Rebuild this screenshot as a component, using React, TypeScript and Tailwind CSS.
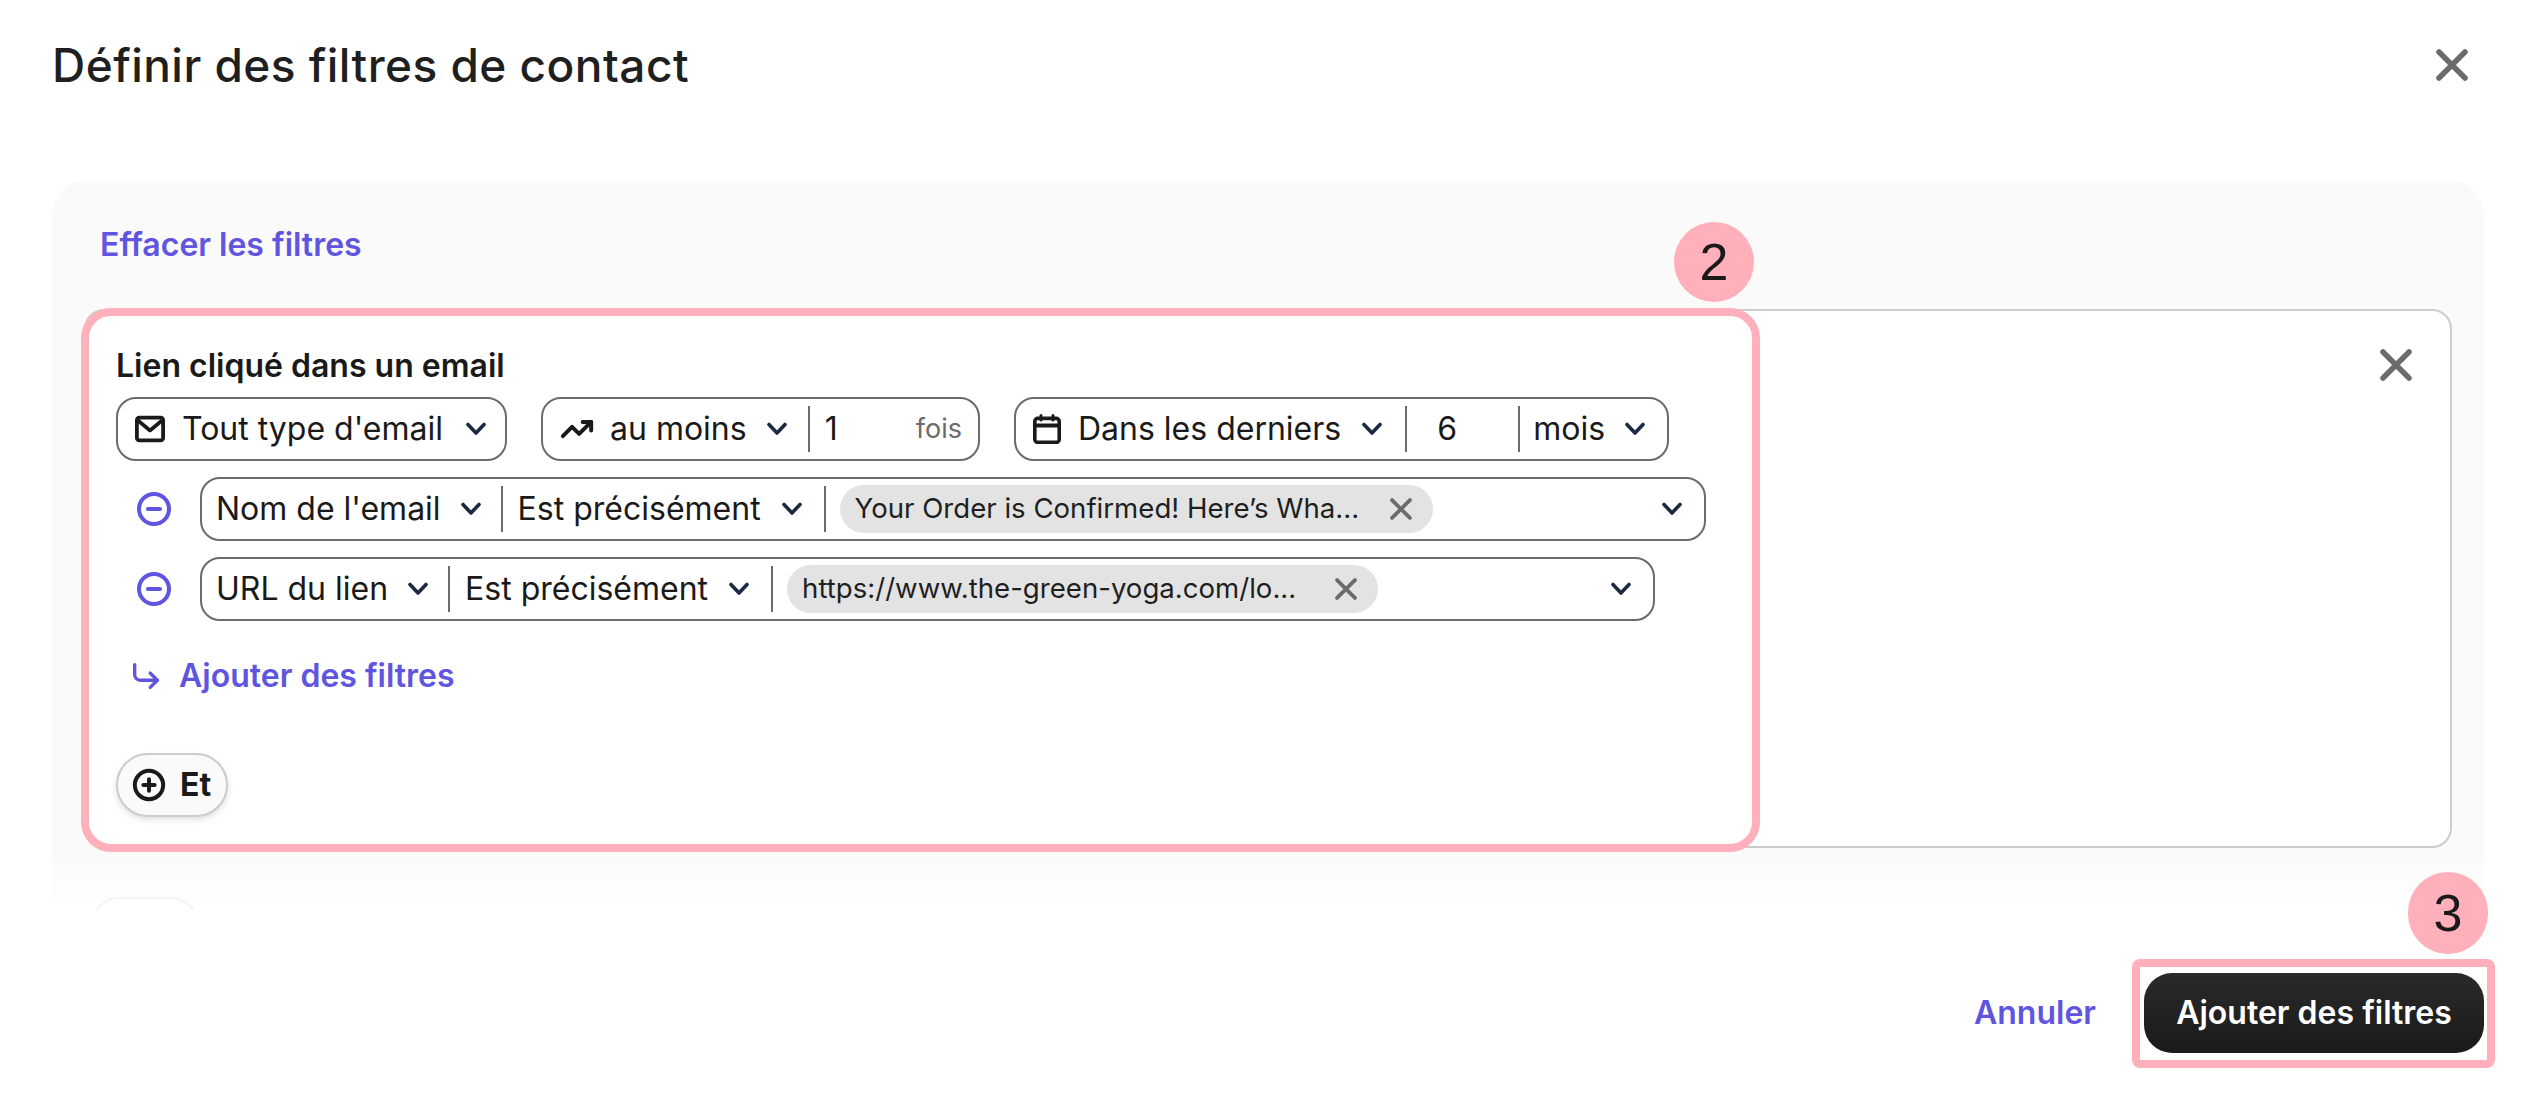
import React from 'react';
import { CircleMinus, CirclePlus, CornerDownRight, TrendingUp } from 'lucide-react';

const Chevron = ({ className = '' }: { className?: string }) => (
  <svg width="24" height="14" viewBox="0 0 24 14" fill="none" className={`shrink-0 ${className}`}>
    <path d="M4 2.5L12 11L20 2.5" stroke="#1b2a41" strokeWidth="3.6" strokeLinecap="round" strokeLinejoin="round" />
  </svg>
);

const Cross = ({ size, stroke }: { size: number; stroke: number }) => (
  <svg width={size} height={size} viewBox="0 0 32 32" fill="none" className="shrink-0">
    <path d="M3 3L29 29M29 3L3 29" stroke="#6b6b6b" strokeWidth={stroke} strokeLinecap="round" />
  </svg>
);

const MailIcon = () => (
  <svg width="30" height="30" viewBox="0 0 30 30" fill="none" className="shrink-0">
    <rect x="1.9" y="3.6" width="26.2" height="22.8" rx="2.5" stroke="#1a1a1a" strokeWidth="3.8" />
    <path d="M3 6.5L15 16.5L27 6.5" stroke="#1a1a1a" strokeWidth="3.6" strokeLinejoin="round" />
  </svg>
);

const CalendarIcon = () => (
  <svg width="28" height="30" viewBox="0 0 28 30" fill="none" className="shrink-0">
    <rect x="1.8" y="4.4" width="24.4" height="24" rx="3" stroke="#1a1a1a" strokeWidth="3.6" />
    <path d="M2 11.5H26" stroke="#1a1a1a" strokeWidth="4" />
    <path d="M8 1.5V6M20 1.5V6" stroke="#1a1a1a" strokeWidth="3" strokeLinecap="round" />
  </svg>
);

const Divider = () => <div className="w-[2px] h-[46px] shrink-0 bg-[#6b6b6b]" />;

const Chip = ({ label, gap }: { label: string; gap: string }) => (
  <div className={`flex items-center h-[48px] pl-[15px] pr-[21px] rounded-full bg-[#e3e3e3] text-[27.6px] text-[#1f1f1f] ${gap}`}>
    <span className="whitespace-nowrap">{label}</span>
    <Cross size={22} stroke={5.5} />
  </div>
);

const FilterRow = ({
  field,
  chip,
  chipGap,
  width,
}: {
  field: string;
  chip: string;
  chipGap: string;
  width: string;
}) => (
  <div className="flex items-center gap-[28px] pl-[20px]">
    <CircleMinus size={36} strokeWidth={2.7} className="shrink-0 text-[#5f55e0]" />
    <div className={`flex items-center h-[64px] pl-[14px] pr-[20px] border-2 border-[#6b6b6b] rounded-[20px] ${width}`}>
      <span className="whitespace-nowrap">{field}</span>
      <Chevron className="ml-[18px]" />
      <div className="ml-[18px] mr-[15px]">
        <Divider />
      </div>
      <span className="whitespace-nowrap">Est précisément</span>
      <Chevron className="ml-[19px]" />
      <div className="ml-[20px] mr-[14px]">
        <Divider />
      </div>
      <Chip label={chip} gap={chipGap} />
      <Chevron className="ml-auto" />
    </div>
  </div>
);

export default function App() {
  return (
    <div className="relative w-[2524px] h-[1098px] overflow-hidden bg-white [font-family:Inter,sans-serif] text-[#1a1a1a]">
      <header className="flex items-center justify-between h-[130px] pl-[52px] pr-[56px]">
        <h1 className="text-[46px] font-medium text-[#1f1f1f] tracking-[0.46px]">Définir des filtres de contact</h1>
        <Cross size={32} stroke={5.5} />
      </header>

      <section className="mt-[51px] ml-[52px] mr-[40px] h-[729px] overflow-hidden rounded-t-[32px] px-[32px] bg-[linear-gradient(to_bottom,#fafafa_0,#fafafa_676px,#ffffff_732px)]">
        <div className="flex items-center h-[128px] pl-[16px]">
          <button className="text-[32px] font-semibold text-[#5f55e0]">Effacer les filtres</button>
        </div>

        <div className="relative h-[539px] border-2 border-[#cccccc] rounded-[20px] bg-white pl-[30px] pt-[35px] text-[32px]">
          <div className="absolute top-[38px] right-[38px]">
            <Cross size={32} stroke={5.5} />
          </div>

          <h2 className="h-[40px] mb-[11px] text-[32px] leading-[40px] font-semibold">Lien cliqué dans un email</h2>

          <div className="flex items-center gap-[34px]">
            <div className="flex items-center w-[391px] h-[64px] pl-[17px] border-2 border-[#6b6b6b] rounded-[20px]">
              <MailIcon />
              <span className="ml-[17px] whitespace-nowrap">Tout type d'email</span>
              <Chevron className="ml-[21px]" />
            </div>

            <div className="flex items-center w-[439px] h-[64px] pl-[17px] border-2 border-[#6b6b6b] rounded-[20px]">
              <TrendingUp size={34} strokeWidth={2.8} className="shrink-0" />
              <span className="ml-[16px] whitespace-nowrap">au moins</span>
              <Chevron className="ml-[18px]" />
              <div className="ml-[19px] mr-[15px]">
                <Divider />
              </div>
              <span>1</span>
              <span className="ml-auto pr-[16px] text-[27px] text-[#6b6b6b]">fois</span>
            </div>

            <div className="flex items-center w-[655px] h-[64px] pl-[17px] border-2 border-[#6b6b6b] rounded-[20px]">
              <CalendarIcon />
              <span className="ml-[17px] whitespace-nowrap">Dans les derniers</span>
              <Chevron className="ml-[19px]" />
              <div className="ml-[21px]">
                <Divider />
              </div>
              <span className="w-[111px] pl-[30px]">6</span>
              <Divider />
              <span className="ml-[13px]">mois</span>
              <Chevron className="ml-[18px]" />
            </div>
          </div>

          <div className="flex flex-col gap-[16px] mt-[16px]">
            <FilterRow
              field="Nom de l'email"
              chip="Your Order is Confirmed! Here’s Wha..."
              chipGap="gap-[31px]"
              width="w-[1506px]"
            />
            <FilterRow
              field="URL du lien"
              chip="https://www.the-green-yoga.com/lo..."
              chipGap="gap-[39px]"
              width="w-[1455px]"
            />
          </div>

          <button className="flex items-center gap-[16px] h-[40px] mt-[35px] pl-[13px] text-[32px] font-semibold text-[#5f55e0]">
            <CornerDownRight size={34} strokeWidth={2.4} className="shrink-0" />
            Ajouter des filtres
          </button>

          <button className="flex items-center gap-[14px] w-[112px] h-[64px] mt-[57px] pl-[14px] border-2 border-[#cccccc] rounded-full bg-[#fafafa] shadow-[0_3px_6px_rgba(0,0,0,0.12)] text-[32px] font-bold">
            <CirclePlus size={34} strokeWidth={2.8} className="shrink-0" />
            Et
          </button>
        </div>

        <div className="w-[110px] h-[40px] mt-[49px] ml-[6px] border-2 border-[#f4f4f4] rounded-t-[30px]" />
      </section>

      <footer className="absolute right-[40px] bottom-[45px] flex items-center gap-[48px]">
        <button className="text-[32px] font-semibold text-[#5f55e0]">Annuler</button>
        <button className="w-[340px] h-[80px] rounded-[28px] bg-[linear-gradient(to_bottom,#2a2a2a,#1a1a1a)] text-[32px] font-semibold text-white">
          Ajouter des filtres
        </button>
      </footer>

      {/* annotations posees sur la capture */}
      <div className="absolute left-[81px] top-[308px] w-[1679px] h-[544px] border-[8px] border-[#ffb0bb] rounded-[30px]" />
      <div className="absolute left-[2132px] top-[959px] w-[363px] h-[109px] border-[8px] border-[#ffb0bb] rounded-[8px]" />
      <div className="absolute left-[1674px] top-[222px] flex items-center justify-center w-[80px] h-[80px] rounded-full bg-[#ffb0bb] text-[52px] [font-family:'Liberation_Sans',sans-serif]">
        2
      </div>
      <div className="absolute left-[2408px] top-[872px] flex items-center justify-center w-[80px] h-[82px] rounded-full bg-[#ffb0bb] text-[52px] [font-family:'Liberation_Sans',sans-serif]">
        3
      </div>
    </div>
  );
}
